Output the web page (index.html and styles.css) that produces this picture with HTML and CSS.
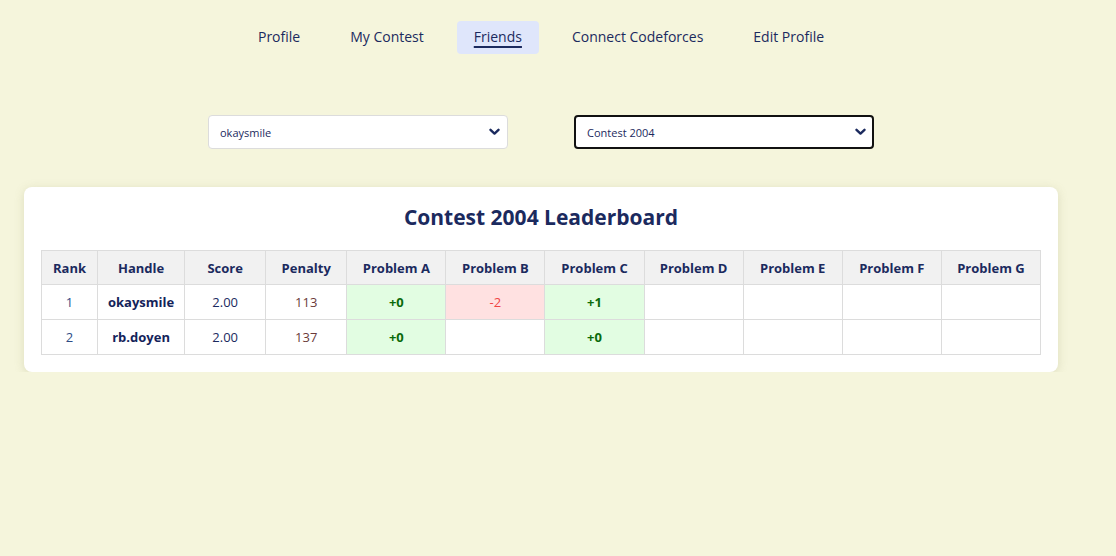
FILE: index.html
```html
<!DOCTYPE html>
<html lang="en">
<head>
<meta charset="utf-8">
<title>Friends - Leaderboard</title>
<link rel="stylesheet" href="styles.css">
</head>
<body>
<div class="page">
  <nav class="nav">
    <a class="nav-item" href="#">Profile</a>
    <a class="nav-item" href="#">My Contest</a>
    <a class="nav-item active" href="#">Friends</a>
    <a class="nav-item" href="#">Connect Codeforces</a>
    <a class="nav-item" href="#">Edit Profile</a>
  </nav>

  <div class="selects">
    <div class="select">
      <span class="select-text">okaysmile</span>
      <svg class="chev" width="11" height="8" viewBox="0 0 11 8"><path d="M1.5 1.8 L5.5 5.6 L9.5 1.8" fill="none" stroke="#1b2a5e" stroke-width="2.4" stroke-linecap="round" stroke-linejoin="round"/></svg>
    </div>
    <div class="select focused">
      <span class="select-text">Contest 2004</span>
      <svg class="chev" width="11" height="8" viewBox="0 0 11 8"><path d="M1.5 1.8 L5.5 5.6 L9.5 1.8" fill="none" stroke="#1b2a5e" stroke-width="2.4" stroke-linecap="round" stroke-linejoin="round"/></svg>
    </div>
  </div>

  <section class="card">
    <h2 class="title">Contest 2004 Leaderboard</h2>
    <table class="board">
      <colgroup>
        <col class="c-rank"><col class="c-handle"><col class="c-score"><col class="c-pen">
        <col class="c-prob"><col class="c-prob"><col class="c-prob"><col class="c-prob"><col class="c-prob"><col class="c-prob"><col class="c-prob">
      </colgroup>
      <thead>
        <tr>
          <th>Rank</th><th>Handle</th><th>Score</th><th>Penalty</th>
          <th>Problem A</th><th>Problem B</th><th>Problem C</th><th>Problem D</th><th>Problem E</th><th>Problem F</th><th>Problem G</th>
        </tr>
      </thead>
      <tbody>
        <tr>
          <td class="rank">1</td><td class="handle">okaysmile</td><td class="score">2.00</td><td class="pen">113</td>
          <td class="ok">+0</td><td class="bad">-2</td><td class="ok">+1</td><td></td><td></td><td></td><td></td>
        </tr>
        <tr>
          <td class="rank">2</td><td class="handle">rb.doyen</td><td class="score">2.00</td><td class="pen">137</td>
          <td class="ok">+0</td><td></td><td class="ok">+0</td><td></td><td></td><td></td><td></td>
        </tr>
      </tbody>
    </table>
  </section>
</div>
</body>
</html>
```

FILE: styles.css
```css
* { box-sizing: border-box; }

html, body {
  margin: 0;
  padding: 0;
  background: #f5f5dc;
}

body {
  font-family: "Open Sans", "Noto Sans", sans-serif;
  color: #1b2a5e;
}

.page {
  width: 1082px;
  padding: 21px 24px 0;
}

.nav {
  display: flex;
  justify-content: center;
  gap: 16px;
}

.nav-item {
  display: block;
  padding: 6px 17px 8px;
  height: 33px;
  font-size: 14px;
  line-height: 19px;
  color: #1b2a5e;
  text-decoration: none;
  border-radius: 4px;
}

.nav-item.active {
  background: #dfe6fb;
  text-decoration: underline;
  text-underline-offset: 4px;
  text-decoration-thickness: 1.5px;
}

.selects {
  display: flex;
  justify-content: center;
  gap: 66px;
  margin-top: 61px;
}

.select {
  width: 300px;
  height: 34px;
  background: #fff;
  border: 1px solid #dcdcdc;
  border-radius: 4px;
  display: flex;
  align-items: center;
  justify-content: space-between;
  padding: 0 7px 0 11px;
}

.select.focused {
  border: 2px solid #111;
  padding: 0 6px 0 11px;
}

.select-text {
  font-size: 11px;
  color: #1b2a5e;
}

.chev { display: block; }

.card {
  margin-top: 38px;
  background: #fff;
  border-radius: 8px;
  padding: 17px;
  box-shadow: 0 2px 10px rgba(150, 150, 100, 0.25);
}

.title {
  margin: 0 0 20px;
  text-align: center;
  font-size: 21px;
  line-height: 26px;
  font-weight: 700;
  color: #1b2a5e;
}

.board {
  width: 1000px;
  border-collapse: collapse;
  table-layout: fixed;
  font-size: 13px;
}

.c-rank { width: 56px; }
.c-handle { width: 87px; }
.c-score { width: 81px; }
.c-pen { width: 81px; }
.c-prob { width: 99px; }

.board th, .board td {
  border: 1px solid #dcdcdc;
  text-align: center;
  padding: 0;
  height: 35px;
}

.board th {
  background: #f1f1f1;
  font-weight: 700;
  color: #1b2a5e;
  height: 34px;
}

.rank { color: #2e4c86; }
.handle { font-weight: 700; color: #14235a; }
.score { color: #1b2a5e; }
.pen { color: #6b3a3a; }

.ok {
  background: #e2fde2;
  color: #0a6a0a;
  font-weight: 700;
}

.bad {
  background: #ffe1e1;
  color: #f04545;
}
```
